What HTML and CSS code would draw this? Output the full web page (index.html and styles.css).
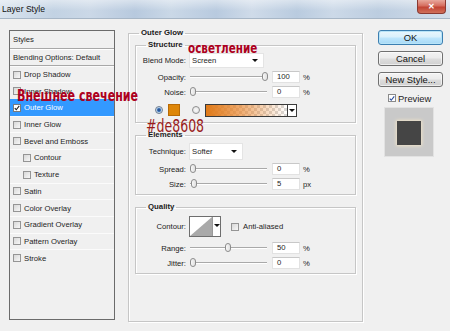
FILE: index.html
```html
<!DOCTYPE html>
<html>
<head>
<meta charset="utf-8">
<link rel="stylesheet" href="styles.css">
</head>
<body>
<div class="window">
  <div class="titlebar">
    <span class="title">Layer Style</span>
    <div class="close">✕</div>
  </div>
  <div class="main">
    <div class="styles-list">
      <div class="row head">Styles</div>
      <div class="row head2">Blending Options: Default</div>
      <div class="row"><span class="cb"></span>Drop Shadow</div>
      <div class="row"><span class="cb"></span>Inner Shadow</div>
      <div class="row sel"><span class="cb on"><svg viewBox="0 0 8 8" width="6" height="6"><path d="M1 4.2 L3 6.3 L7 1.2" fill="none" stroke="#1a1a1a" stroke-width="1.4"/></svg></span>Outer Glow</div>
      <div class="row"><span class="cb"></span>Inner Glow</div>
      <div class="row"><span class="cb"></span>Bevel and Emboss</div>
      <div class="row sub"><span class="cb"></span>Contour</div>
      <div class="row sub"><span class="cb"></span>Texture</div>
      <div class="row"><span class="cb"></span>Satin</div>
      <div class="row"><span class="cb"></span>Color Overlay</div>
      <div class="row"><span class="cb"></span>Gradient Overlay</div>
      <div class="row"><span class="cb"></span>Pattern Overlay</div>
      <div class="row"><span class="cb"></span>Stroke</div>
    </div>

    <fieldset class="outer">
      <legend>Outer Glow</legend>

      <fieldset class="grp structure">
        <legend>Structure</legend>
        <div class="frow h15">
          <label>Blend Mode:</label>
          <div class="select blend">Screen<i class="arr"></i></div>
        </div>
        <div class="frow h14 mt2">
          <label>Opacity:</label>
          <div class="slider"><i class="thumb" style="left:73px"></i></div>
          <div class="num">100</div><span class="unit">%</span>
        </div>
        <div class="frow h14 mt1">
          <label>Noise:</label>
          <div class="slider"><i class="thumb" style="left:1px"></i></div>
          <div class="num">0</div><span class="unit">%</span>
        </div>
        <div class="crow mt5">
          <span class="radio on"></span>
          <span class="swatch"></span>
          <span class="radio r2"></span>
          <div class="gradbar"><span class="grad"></span><span class="garr"><i class="arr"></i></span></div>
        </div>
      </fieldset>

      <fieldset class="grp elements">
        <legend>Elements</legend>
        <div class="frow h17">
          <label>Technique:</label>
          <div class="select tech">Softer<i class="arr"></i></div>
        </div>
        <div class="frow h14 mt2">
          <label>Spread:</label>
          <div class="slider"><i class="thumb" style="left:1px"></i></div>
          <div class="num">0</div><span class="unit">%</span>
        </div>
        <div class="frow h14 mt1">
          <label>Size:</label>
          <div class="slider"><i class="thumb" style="left:2px"></i></div>
          <div class="num">5</div><span class="unit">px</span>
        </div>
      </fieldset>

      <fieldset class="grp quality">
        <legend>Quality</legend>
        <div class="frow h21">
          <label>Contour:</label>
          <div class="contour">
            <span class="cbox"><svg viewBox="0 0 22 19" width="22" height="19" preserveAspectRatio="none"><polygon points="0,19 22,0 22,19" fill="#a9a9a9"/></svg></span>
            <span class="carr"><i class="arr"></i></span>
          </div>
          <span class="cb aa"></span><span class="aatext">Anti-aliased</span>
        </div>
        <div class="frow h14 mt4">
          <label>Range:</label>
          <div class="slider"><i class="thumb" style="left:36px"></i></div>
          <div class="num">50</div><span class="unit">%</span>
        </div>
        <div class="frow h14 mt1">
          <label>Jitter:</label>
          <div class="slider"><i class="thumb" style="left:1px"></i></div>
          <div class="num">0</div><span class="unit">%</span>
        </div>
      </fieldset>
    </fieldset>

    <div class="side">
      <div class="btn ok">OK</div>
      <div class="btn">Cancel</div>
      <div class="btn">New Style...</div>
      <div class="prev-row"><span class="cb on blue"><svg viewBox="0 0 8 8" width="7" height="7"><path d="M1 4.2 L3 6.3 L7 1.2" fill="none" stroke="#2a4fa0" stroke-width="1.5"/></svg></span>Preview</div>
      <div class="preview"><div class="pv-inner"></div></div>
    </div>
  </div>

  <div class="note n1">Внешнее свечение</div>
  <div class="note n2">осветление</div>
  <div class="note n3">#de8608</div>
</div>
</body>
</html>
```

FILE: styles.css
```css
html, body {
  margin: 0;
  padding: 0;
}
body {
  width: 450px;
  height: 331px;
  overflow: hidden;
  background: #f0f0f0;
  font-family: "Liberation Sans", Arial, sans-serif;
  font-size: 7.7px;
  color: #1e1e1e;
}
.window {
  position: relative;
  width: 450px;
  height: 331px;
}

/* title bar */
.titlebar {
  height: 18px;
  border-bottom: 1px solid #a7b6c6;
  background:
    linear-gradient(180deg, rgba(255,255,255,0.45), rgba(255,255,255,0) 60%),
    linear-gradient(90deg, #d9e3ee 0%, #c2d2e3 12%, #cbd8e7 20%, #b7c9de 30%, #cad8e7 38%, #b8cadf 48%, #cfdbe9 56%, #b9cbdf 66%, #ccd9e8 74%, #bccde0 84%, #d3deea 100%);
  display: flex;
  align-items: center;
  justify-content: space-between;
}
.title {
  margin-left: 2px;
  font-size: 8.6px;
  color: #111;
}
.close {
  align-self: flex-start;
  width: 29px;
  height: 14px;
  margin-right: 4px;
  box-sizing: border-box;
  border: 1px solid #8a3a32;
  border-top: none;
  border-radius: 0 0 4px 4px;
  background: linear-gradient(180deg, #e8a89c 0%, #d56d5e 45%, #c24434 55%, #d0705a 100%);
  color: #fff;
  font-size: 8px;
  font-weight: bold;
  display: flex;
  align-items: center;
  justify-content: center;
}

.main {
  display: flex;
  align-items: flex-start;
}

/* styles list */
.styles-list {
  margin: 11px 0 0 9px;
  width: 106px;
  height: 290px;
  box-sizing: border-box;
  border: 1px solid #6b6b6b;
  background: #f0f0f0;
}
.row {
  height: 16.7px;
  box-sizing: border-box;
  display: flex;
  align-items: center;
  padding-left: 3px;
  border-top: 1px solid #fbfbfb;
  white-space: nowrap;
}
.row .cb {
  margin-right: 3px;
}
.row.head {
  height: 18px;
  border-top: none;
  border-bottom: 1px solid #a8a8a8;
}
.row.head2 {
  border-top: 1px solid #fff;
  border-bottom: 1px solid #a8a8a8;
}
.row.sub {
  padding-left: 13px;
}
.row.sel {
  background: #3399ff;
  color: #fff;
  border-top-color: #3399ff;
}

.cb {
  width: 8px;
  height: 8px;
  flex: none;
  box-sizing: border-box;
  border: 1px solid #959595;
  background: linear-gradient(135deg, #d8d8d8, #f7f7f7);
  display: inline-flex;
  align-items: center;
  justify-content: center;
}
.cb.on {
  background: #fff;
  border-color: #7a7a7a;
}

/* fieldsets */
fieldset {
  margin: 0;
  min-inline-size: 0;
}
legend {
  font-weight: bold;
  font-size: 7.8px;
  line-height: 10px;
  padding: 0 2px;
  color: #1a1a1a;
}
.outer {
  margin: 9px 0 0 13px;
  width: 235px;
  height: 294px;
  box-sizing: border-box;
  border: 1px solid #c6c6c6;
  box-shadow: 1px 1px 0 #fff, inset 1px 1px 0 #fff;
  padding: 0 6px;
}
.outer > legend {
  margin-left: 4px;
}
.grp {
  margin-top: 7px;
  border: 1px solid #c6c6c6;
  box-shadow: 1px 1px 0 #fff, inset 1px 1px 0 #fff;
  padding: 0;
}
.grp > legend {
  margin-left: 10px;
}
.structure {
  margin-top: 2px;
  padding: 3px 0 6px;
}
.elements {
  padding: 3px 0 3px;
}
.quality {
  padding: 4px 0 3px;
}

.frow {
  display: flex;
  align-items: center;
}
.frow > label {
  width: 50px;
  margin-right: 3px;
  text-align: right;
  flex: none;
  color: #222;
}
.h14 { height: 14px; }
.h15 { height: 15px; }
.h17 { height: 17px; }
.h21 { height: 21px; }
.mt1 { margin-top: 1px; }
.mt2 { margin-top: 2px; }
.mt4 { margin-top: 4px; }
.mt5 { margin-top: 5px; }

.select {
  box-sizing: border-box;
  background: #fff;
  border: 1px solid #e4e4e4;
  display: flex;
  align-items: center;
  justify-content: space-between;
  padding: 0 5px 0 2px;
}
.select.blend {
  width: 75px;
  height: 15px;
}
.select.tech {
  width: 54px;
  height: 17px;
}
.arr {
  width: 0;
  height: 0;
  border-left: 3px solid transparent;
  border-right: 3px solid transparent;
  border-top: 3px solid #111;
}

.slider {
  position: relative;
  width: 79px;
  height: 14px;
  flex: none;
  display: flex;
  align-items: center;
}
.slider::before {
  content: "";
  display: block;
  margin-left: 1px;
  width: 77px;
  height: 1px;
  background: #a9a9a9;
  border-bottom: 1px solid #fff;
}
.thumb {
  position: absolute;
  top: 2px;
  width: 6px;
  height: 9px;
  box-sizing: border-box;
  border: 1px solid #8c8c8c;
  border-radius: 3px;
  background: linear-gradient(90deg, #f8f8f8, #e0e0e0);
}
.num {
  margin-left: 4px;
  width: 28px;
  height: 12px;
  box-sizing: border-box;
  background: #fff;
  border: 1px solid #e2e2e2;
  border-top-color: #c8c8c8;
  padding-left: 4px;
  line-height: 10px;
  flex: none;
}
.unit {
  margin-left: 3px;
}

/* color row */
.crow {
  display: flex;
  align-items: center;
  height: 12px;
  padding-left: 19px;
}
.radio {
  width: 8px;
  height: 8px;
  box-sizing: border-box;
  border-radius: 50%;
  border: 1px solid #8e8e8e;
  background: radial-gradient(circle, #fafafa 0, #dedede 100%);
  flex: none;
}
.radio.on {
  background: radial-gradient(circle, #1c3f7a 0, #3b6fb5 1.5px, #bcd3ea 2.5px, #dcdcdc 100%);
  border-color: #6f7f92;
}
.swatch {
  margin-left: 5px;
  width: 12px;
  height: 12px;
  box-sizing: border-box;
  background: #de8608;
  border: 1px solid #b86a05;
  flex: none;
}
.radio.r2 {
  margin-left: 12px;
}
.gradbar {
  margin-left: 5px;
  width: 92px;
  height: 13px;
  box-sizing: border-box;
  border: 1px solid #3a3a3a;
  display: flex;
  background: #fff;
}
.grad {
  flex: 1;
  background:
    linear-gradient(90deg, #e07a18 0%, rgba(232,130,40,0.7) 40%, rgba(236,150,80,0) 100%),
    repeating-conic-gradient(#d8d8d8 0 25%, #fff 0 50%) 0 0 / 6px 6px;
  border-right: 1px solid #3a3a3a;
}
.garr {
  width: 8px;
  display: flex;
  align-items: center;
  justify-content: center;
  background: #fff;
}

/* contour */
.contour {
  display: flex;
  height: 21px;
  box-sizing: border-box;
  border: 1px solid #6e6e6e;
  background: #fff;
}
.cbox {
  width: 22px;
  height: 19px;
  display: block;
  border-right: 1px solid #9a9a9a;
}
.cbox svg {
  display: block;
}
.carr {
  width: 7px;
  display: flex;
  justify-content: center;
  padding-top: 7px;
  box-sizing: border-box;
}
.cb.aa {
  margin-left: 10px;
}
.aatext {
  margin-left: 4px;
}

/* right column */
.side {
  margin: 11px 0 0 15px;
  width: 65px;
  display: flex;
  flex-direction: column;
}
.btn {
  height: 15px;
  box-sizing: border-box;
  border: 1px solid #707070;
  border-radius: 3px;
  background: linear-gradient(180deg, #f3f3f3 0%, #ebebeb 48%, #dddddd 52%, #d0d0d0 100%);
  font-size: 9.4px;
  line-height: 13px;
  text-align: center;
  color: #111;
  margin-bottom: 6px;
  box-shadow: inset 0 0 0 1px rgba(255,255,255,0.6);
}
.btn.ok {
  border-color: #3c7fb1;
  background: linear-gradient(180deg, #e8f6fd 0%, #d9f0fc 48%, #bee6fd 52%, #a7d9f5 100%);
  box-shadow: inset 0 0 0 1px #b8e4f8;
}
.prev-row {
  display: flex;
  align-items: center;
  height: 10px;
  padding-left: 10px;
  font-size: 9.4px;
}
.prev-row .cb {
  margin-right: 2px;
  background: #fff;
  border-color: #8a8a8a;
}
.preview {
  margin: 4px 0 0 6px;
  width: 50px;
  height: 50px;
  box-sizing: border-box;
  background: #c9c9c9;
  border: 1px solid #e2e2e2;
  padding: 13px 0 0 12px;
}
.pv-inner {
  width: 24px;
  height: 24px;
  background: #454545;
  box-shadow: 0 0 3px 1px #efe3c9;
}

/* annotation overlays */
.note {
  position: absolute;
  font-family: "DejaVu Sans Condensed", "Liberation Sans", sans-serif;
  font-stretch: condensed;
  color: #ad0020;
  line-height: 16px;
  white-space: nowrap;
  transform-origin: 0 0;
}
.n1 {
  left: 17px;
  top: 88px;
  font-size: 16px;
  font-weight: bold;
  transform: scaleX(0.77);
}
.n2 {
  left: 188px;
  top: 40px;
  font-size: 14.5px;
  font-weight: bold;
  transform: scaleX(0.8);
}
.n3 {
  left: 146px;
  top: 118px;
  font-size: 17px;
  color: #9a1a1a;
  transform: scaleX(0.82);
}
```
